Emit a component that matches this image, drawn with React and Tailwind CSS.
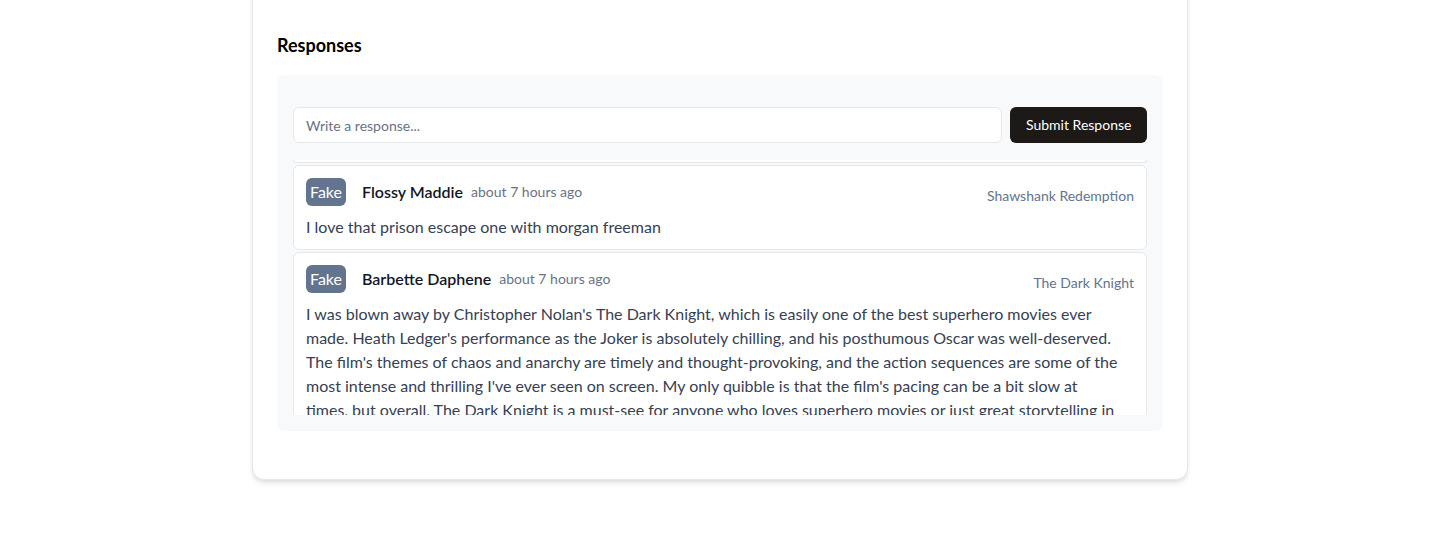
export default function App() {
  const responses = [
    {
      id: 1,
      name: "Flossy Maddie",
      time: "about 7 hours ago",
      movie: "Shawshank Redemption",
      text: "I love that prison escape one with morgan freeman",
    },
    {
      id: 2,
      name: "Barbette Daphene",
      time: "about 7 hours ago",
      movie: "The Dark Knight",
      text: "I was blown away by Christopher Nolan's The Dark Knight, which is easily one of the best superhero movies ever made. Heath Ledger's performance as the Joker is absolutely chilling, and his posthumous Oscar was well-deserved. The film's themes of chaos and anarchy are timely and thought-provoking, and the action sequences are some of the most intense and thrilling I've ever seen on screen. My only quibble is that the film's pacing can be a bit slow at times, but overall, The Dark Knight is a must-see for anyone who loves superhero movies or just great storytelling in general.",
    },
  ];

  return (
    <div
      className="flex min-h-screen justify-center bg-white pl-[2px]"
      style={{ fontFamily: "Lato, 'Noto Sans', sans-serif" }}
    >
      <div className="-mt-[21px] h-fit w-[936px] rounded-xl border border-gray-200 bg-white px-6 pt-[51px] pb-12 shadow-md">
        <h2 className="mb-4 text-[18px] leading-7 font-bold text-black">Responses</h2>

        {/* Responses panel */}
        <div className="rounded-lg bg-[#f8f9fb] p-4 pt-8">
          <div className="flex gap-2">
            <input
              type="text"
              placeholder="Write a response..."
              className="h-9 flex-1 rounded-md border border-gray-200 bg-white px-3 text-sm text-gray-700 placeholder:text-gray-500 outline-none"
            />
            <button className="h-9 w-[137px] whitespace-nowrap rounded-md bg-[#1c1917] px-4 text-sm text-white">
              Submit Response
            </button>
          </div>

          <div className="mt-[17px] h-[255px] overflow-hidden">
            <div className="h-[3px] rounded-b-md border-x border-b border-gray-200 bg-white"></div>
            <div className="mt-[2px] space-y-[2px]">
              {responses.map((r) => (
                <div
                  key={r.id}
                  className="rounded-md border border-gray-200 bg-white px-3 pt-3 pb-[10px]"
                >
                  <div className="flex items-end justify-between">
                    <div className="flex items-center">
                      <span className="flex h-7 w-10 items-center justify-center rounded-md bg-slate-500 text-base text-white">
                        Fake
                      </span>
                      <span className="ml-4 text-base font-semibold text-gray-900">{r.name}</span>
                      <span className="ml-2 text-sm text-gray-500">{r.time}</span>
                    </div>
                    <span className="text-sm leading-5 text-slate-500">{r.movie}</span>
                  </div>
                  <p className="mt-[9px] pr-[16px] text-base leading-6 text-gray-700">{r.text}</p>
                </div>
              ))}
            </div>
          </div>
        </div>
      </div>
    </div>
  );
}
